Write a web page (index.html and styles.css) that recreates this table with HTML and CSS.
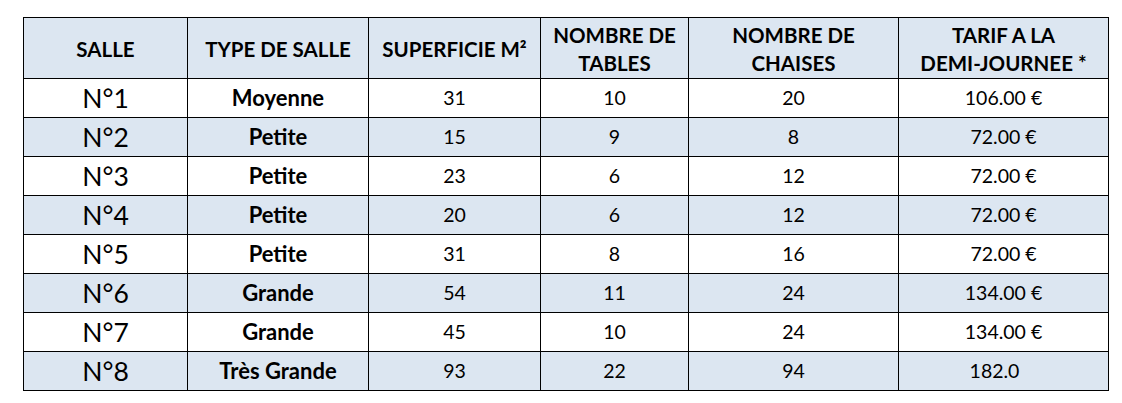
FILE: index.html
```html
<!DOCTYPE html>
<html lang="fr">
<head>
<meta charset="utf-8">
<link rel="stylesheet" href="styles.css">
</head>
<body>
<table class="salles">
  <colgroup>
    <col class="c1"><col class="c2"><col class="c3"><col class="c4"><col class="c5"><col class="c6">
  </colgroup>
  <thead>
    <tr>
      <th>SALLE</th>
      <th>TYPE DE SALLE</th>
      <th>SUPERFICIE M²</th>
      <th>NOMBRE DE<br>TABLES</th>
      <th>NOMBRE DE<br>CHAISES</th>
      <th>TARIF A LA<br>DEMI-JOURNEE *</th>
    </tr>
  </thead>
  <tbody>
    <tr><td class="num">N°1</td><td class="type">Moyenne</td><td>31</td><td>10</td><td>20</td><td>106.00 €</td></tr>
    <tr class="alt"><td class="num">N°2</td><td class="type">Petite</td><td>15</td><td>9</td><td>8</td><td>72.00 €</td></tr>
    <tr><td class="num">N°3</td><td class="type">Petite</td><td>23</td><td>6</td><td>12</td><td>72.00 €</td></tr>
    <tr class="alt"><td class="num">N°4</td><td class="type">Petite</td><td>20</td><td>6</td><td>12</td><td>72.00 €</td></tr>
    <tr><td class="num">N°5</td><td class="type">Petite</td><td>31</td><td>8</td><td>16</td><td>72.00 €</td></tr>
    <tr class="alt"><td class="num">N°6</td><td class="type">Grande</td><td>54</td><td>11</td><td>24</td><td>134.00 €</td></tr>
    <tr><td class="num">N°7</td><td class="type">Grande</td><td>45</td><td>10</td><td>24</td><td>134.00 €</td></tr>
    <tr class="alt"><td class="num">N°8</td><td class="type">Très Grande</td><td>93</td><td>22</td><td>94</td><td class="shift">182.0</td></tr>
  </tbody>
</table>
</body>
</html>
```
FILE: styles.css
```css
html, body {
  margin: 0;
  padding: 0;
  background: #ffffff;
}
body {
  padding: 17px 0 0 23px;
  font-family: Lato, "Open Sans", sans-serif;
  color: #000;
}
.salles {
  border-collapse: collapse;
  table-layout: fixed;
  width: 1085px;
}
.c1 { width: 164px; }
.c2 { width: 181px; }
.c3 { width: 172px; }
.c4 { width: 148px; }
.c5 { width: 210px; }
.c6 { width: 210px; }
.salles th, .salles td {
  border: 1px solid #000;
  text-align: center;
  padding: 0;
}
.salles th {
  background: #dce6f1;
  height: 59px;
  font-weight: 700;
  font-size: 20.5px;
  line-height: 28px;
  padding-top: 1px;
}
.salles td {
  height: 38px;
  font-size: 19.5px;
  line-height: 24px;
}
.salles tr.alt td {
  background: #dce6f1;
}
.salles td.num {
  font-size: 26.5px;
  font-weight: 400;
}
.salles td.type {
  font-weight: 700;
  font-size: 22px;
}
.salles td.shift {
  padding-right: 18px;
}
```
